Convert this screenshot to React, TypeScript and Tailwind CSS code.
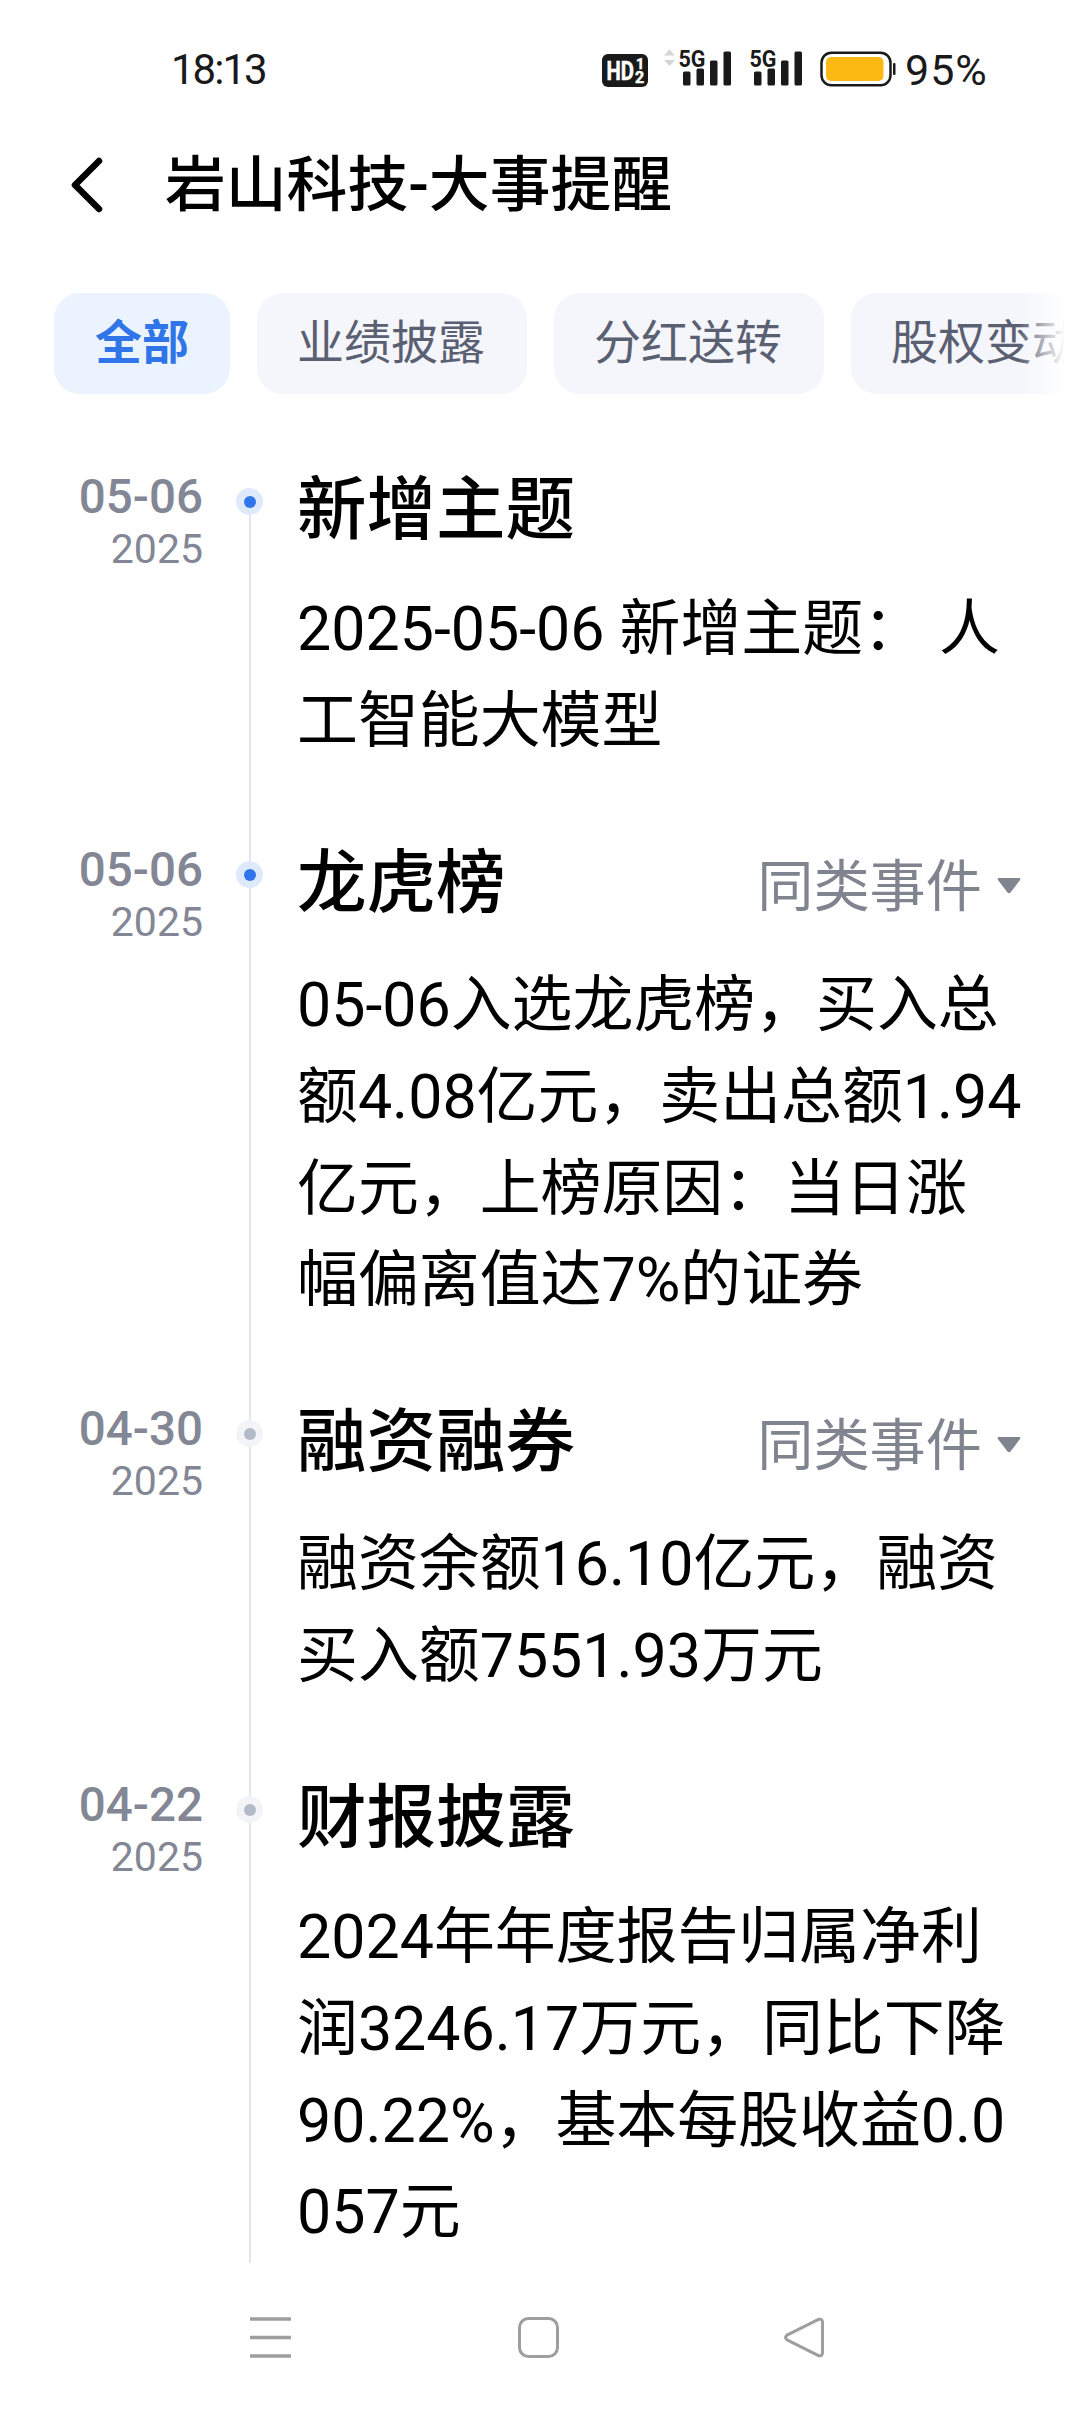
import { clsx } from 'clsx'

type TimelineEvent = {
  id: number
  date: string
  year: string
  title: string
  body: string
  active?: boolean
  hasMore?: boolean
  height: string
}

const tabs = ['全部', '业绩披露', '分红送转', '股权变动']

const events: TimelineEvent[] = [
  {
    id: 1,
    date: '05-06',
    year: '2025',
    title: '新增主题',
    body: '2025-05-06 新增主题： 人工智能大模型',
    active: true,
    height: 'h-[373px]',
  },
  {
    id: 2,
    date: '05-06',
    year: '2025',
    title: '龙虎榜',
    body: '05-06入选龙虎榜，买入总额4.08亿元，卖出总额1.94亿元，上榜原因：当日涨幅偏离值达7%的证券',
    active: true,
    hasMore: true,
    height: 'h-[559px]',
  },
  {
    id: 3,
    date: '04-30',
    year: '2025',
    title: '融资融券',
    body: '融资余额16.10亿元，融资买入额7551.93万元',
    hasMore: true,
    height: 'h-[376px]',
  },
  {
    id: 4,
    date: '04-22',
    year: '2025',
    title: '财报披露',
    body: '2024年年度报告归属净利润3246.17万元，同比下降90.22%，基本每股收益0.0057元',
    height: 'h-[492px]',
  },
]

function HdIcon() {
  return (
    <svg width="46" height="33" viewBox="0 0 46 33" className="mt-[54px]">
      <rect width="46" height="33" rx="6" fill="#1a1a1a" />
      <g fill="#fff" stroke="#fff" strokeWidth="0.5" fontFamily="Roboto, sans-serif" fontWeight="700">
        <text x="4.5" y="25.5" fontSize="25" textLength="27.5" lengthAdjust="spacingAndGlyphs">HD</text>
        <text x="34" y="14.5" fontSize="14.5">1</text>
        <text x="33" y="28.5" fontSize="16">2</text>
      </g>
    </svg>
  )
}

function SignalIcon({ arrows = false }: { arrows?: boolean }) {
  return (
    <svg width="70" height="50" viewBox="0 -10 70 50" className="mt-[38px]">
      {arrows && <path d="M7.5 1.5l5.5 6H2zM7.5 18l5.5-6H2z" fill="#d6d6d6" />}
      <text
        x="16.5"
        y="18.5"
        fontSize="24.5"
        fontWeight="700"
        fontFamily="Roboto, sans-serif"
        textLength="27"
        lengthAdjust="spacingAndGlyphs"
        fill="#1a1a1a"
      >
        5G
      </text>
      <g fill="#1a1a1a">
        <rect x="21" y="23.5" width="7.5" height="14" rx="1.5" />
        <rect x="34.5" y="20.5" width="7.5" height="17" rx="1.5" />
        <rect x="48" y="12.5" width="7.5" height="25" rx="1.5" />
        <rect x="61.5" y="3.5" width="7.5" height="34" rx="1.5" />
      </g>
    </svg>
  )
}

function BatteryIcon() {
  return (
    <svg width="76" height="36" viewBox="0 0 76 36" className="mt-[51px]">
      <rect x="1.5" y="1.75" width="69" height="32.5" rx="10" fill="none" stroke="#1a1a1a" strokeWidth="2.5" />
      <rect x="6" y="6" width="57.5" height="24" rx="5" fill="#fdb913" />
      <rect x="73" y="12" width="2.5" height="12" rx="1" fill="#1a1a1a" />
    </svg>
  )
}

function StatusBar() {
  return (
    <div className="flex h-[120px] items-start pl-[171px] text-[42px] leading-[50px] text-[#1a1a1a]">
      <span className="mt-[45px] w-[431px] tracking-[-2px]">18:13</span>
      <HdIcon />
      <div className="ml-[14px] flex gap-px">
        <SignalIcon arrows />
        <SignalIcon />
      </div>
      <div className="ml-[17px] flex">
        <BatteryIcon />
        <span className="mt-[45px] ml-[9px] text-[43px] tracking-[1px]">95%</span>
      </div>
    </div>
  )
}

function Header() {
  return (
    <header className="flex h-[130px] items-center pl-[69px]">
      <svg width="36" height="60" viewBox="0 0 36 60" fill="none">
        <path d="M30 6L6 30l24 24" stroke="#000" strokeWidth="6.5" strokeLinecap="round" strokeLinejoin="round" />
      </svg>
      <h1 className="mt-[2px] ml-[60px] text-[60.8px] leading-[80px] font-medium text-black">岩山科技-大事提醒</h1>
    </header>
  )
}

function TabBar() {
  return (
    <div className="relative ml-[54px] mt-[43px] flex h-[101px] w-[1011px] gap-[27px] overflow-hidden">
      {tabs.map((tab, i) => (
        <button
          key={tab}
          className={clsx(
            'h-full shrink-0 rounded-[26px] text-[47px] whitespace-nowrap',
            i === 0
              ? 'bg-[#ebf3fe] px-[41px] font-bold text-[#2f74e8]'
              : 'bg-[#f4f6fb] pr-[42px] pl-[40px] text-[#5a6071]',
          )}
        >
          {tab}
        </button>
      ))}
      {/* 右侧渐隐 */}
      <div className="absolute inset-y-0 right-0 w-[46px] bg-linear-to-r from-white/0 to-white" />
    </div>
  )
}

function Dot({ active }: { active?: boolean }) {
  return (
    <span
      className={clsx(
        'relative mt-[25px] flex size-[27px] items-center justify-center rounded-full',
        active ? 'bg-[#dfe9fc]' : 'bg-[#f3f4f7]',
      )}
    >
      <span className={clsx('size-[12px] rounded-full', active ? 'bg-[#2f74ea]' : 'bg-[#b3b9c7]')} />
    </span>
  )
}

function EventRow({ event, first }: { event: TimelineEvent; first: boolean }) {
  return (
    <div className={clsx('flex shrink-0', event.height)}>
      <div className="w-[203px] text-right text-[#838795]">
        <div className="mt-[6px] text-[47.5px] leading-[56px] font-medium">{event.date}</div>
        <div className="text-[41px] leading-[49px]">{event.year}</div>
      </div>

      {/* 时间轴 */}
      <div className="relative ml-[33px] flex w-[27px] justify-center">
        <div className={clsx('absolute bottom-0 left-[13px] w-[1.5px] bg-[#e4e5e9]', first ? 'top-[38px]' : 'top-0')} />
        <Dot active={event.active} />
      </div>

      <div className="ml-[34px] w-[730px]">
        <div className="flex h-[92px] items-center">
          <h2 className="mt-[4px] text-[69.5px] leading-[92px] font-medium text-black">{event.title}</h2>
          {event.hasMore && (
            <div className="mt-[9px] mr-[5px] ml-auto flex items-center text-[#80848f]">
              <span className="text-[56.2px] leading-[70px]">同类事件</span>
              <svg width="26" height="16" viewBox="0 0 26 16" className="ml-[14px] -mt-[2px]">
                <path d="M2.5 0h21q1.5.5.5 2L14.5 14.5q-1.5 1.5-3 0L2 2q-1-1.5.5-2z" fill="currentColor" />
              </svg>
            </div>
          )}
        </div>
        <p
          className={clsx(
            'text-[60.9px] leading-[91.8px] break-all text-black',
            event.hasMore ? 'mt-[32px]' : 'mt-[29px]',
          )}
        >
          {event.body}
        </p>
      </div>
    </div>
  )
}

function NavBar() {
  return (
    <nav className="flex h-[149px] items-start pt-[54px] pl-[250px]" aria-label="系统导航">
      <svg width="41" height="41" viewBox="0 0 41 41" stroke="#9e9e9e" strokeWidth="3.6">
        <path d="M0 2h41M0 20.5h41M0 39h41" />
      </svg>
      <svg width="41" height="41" viewBox="0 0 41 41" fill="none" className="ml-[227px]">
        <rect x="1.5" y="1.5" width="38" height="38" rx="9" stroke="#9e9e9e" strokeWidth="3" />
      </svg>
      <svg width="41" height="41" viewBox="0 0 41 41" fill="none" className="ml-[225px]">
        <path
          d="M34.5 2.3L3 18.2q-3 2.3 0 4.6L34.5 38.7Q38.5 39.5 38.5 35.5V5.5Q38.5 1.5 34.5 2.3z"
          stroke="#9e9e9e"
          strokeWidth="3"
          strokeLinejoin="round"
        />
      </svg>
    </nav>
  )
}

export default function App() {
  return (
    <div className="flex h-[2412px] w-[1080px] flex-col overflow-hidden bg-white font-[Roboto,'Noto_Sans_CJK_SC',sans-serif]">
      <StatusBar />
      <Header />
      <TabBar />
      <main className="mt-[69px] flex h-[1800px] flex-col overflow-hidden">
        {events.map((event, i) => (
          <EventRow key={event.id} event={event} first={i === 0} />
        ))}
      </main>
      <NavBar />
    </div>
  )
}
